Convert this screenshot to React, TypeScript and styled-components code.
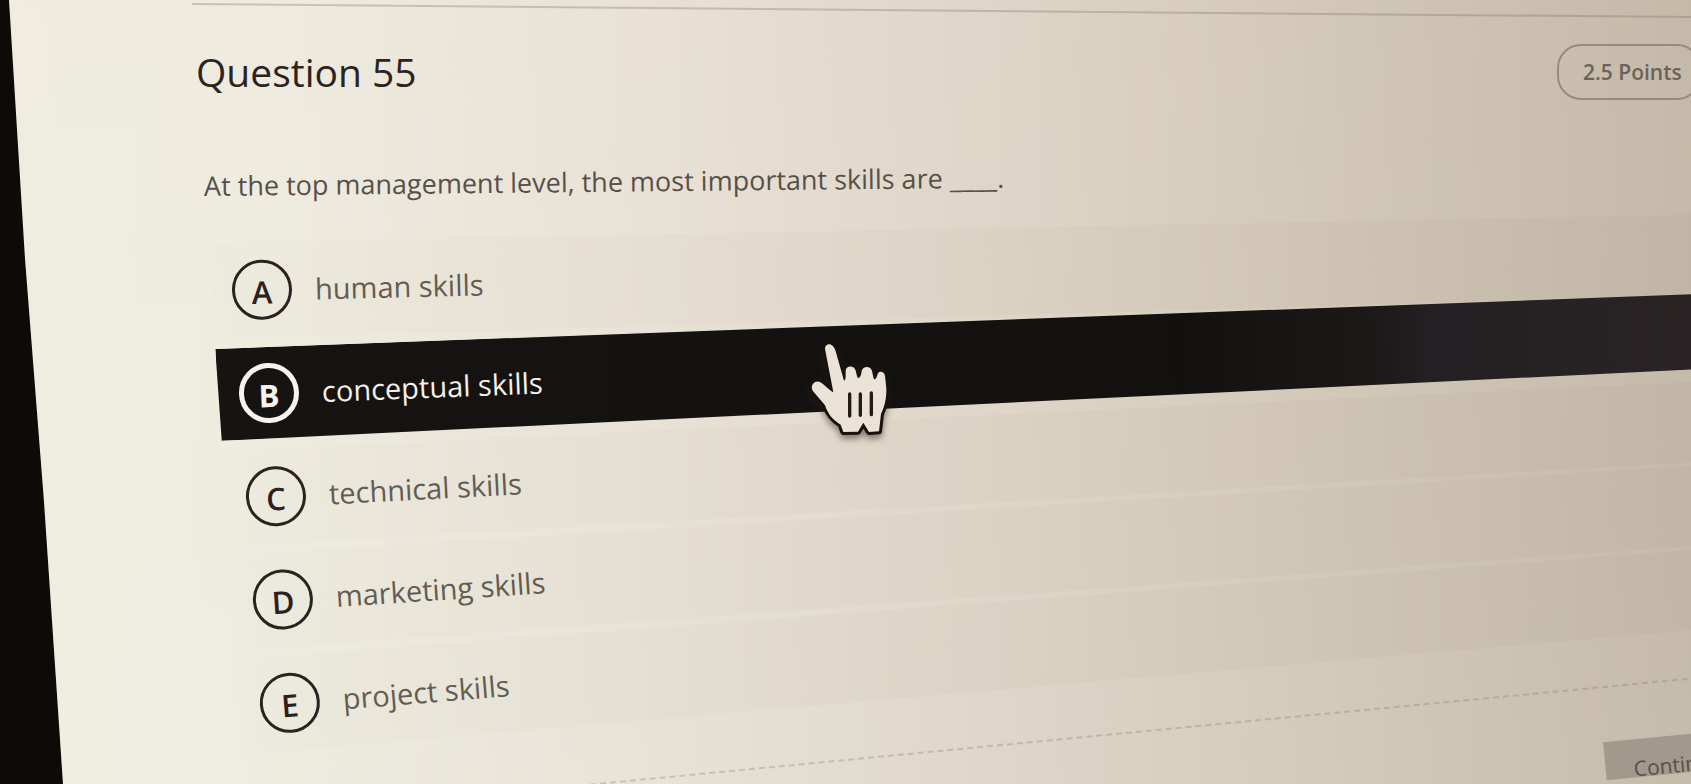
import React, { useState } from "react";
import styled, { createGlobalStyle } from "styled-components";

const GlobalStyle = createGlobalStyle`
  * { box-sizing: border-box; }
  body {
    margin: 0;
    background: #0d0b08;
    font-family: "Open Sans", "Noto Sans", sans-serif;
  }
`;

const Screen = styled.main`
  position: relative;
  height: 100vh;
  overflow: hidden;
  padding: 3px 0 0 192px;
  display: flex;
  flex-direction: column;
  background:
    linear-gradient(180deg, rgba(228, 196, 178, 0.08), rgba(232, 228, 214, 0.12)),
    linear-gradient(93deg, #f0f0e3 0%, #efeee2 16%, #e9e3d8 38%, #ded6c9 58%, #d0c7b7 78%, #c1b6a6 100%);
  clip-path: polygon(9px 0, 100% 0, 100% 100%, 63px 100%, 44px 64%, 25px 33%);
`;

const TopRule = styled.hr`
  width: 100%;
  flex: none;
  margin: 0;
  border: 0;
  border-top: 2px solid rgba(120, 108, 96, 0.32);
  transform: rotate(0.5deg);
  transform-origin: left;
`;

const Header = styled.header`
  display: flex;
  justify-content: space-between;
  align-items: center;
  margin-top: 39px;
  padding-left: 4px;
`;

const Title = styled.h1`
  margin: 0;
  font-size: 39px;
  line-height: 56px;
  font-weight: 400;
  color: #2c2322;
`;

const Points = styled.span`
  width: 144px;
  height: 56px;
  margin-right: -10px;
  padding-left: 24px;
  border: 2px solid #968b7e;
  border-radius: 24px;
  font-size: 21px;
  line-height: 52px;
  font-weight: 600;
  color: #6b635a;
`;

const Prompt = styled.p`
  margin: 66px 0 37px 12px;
  font-size: 27px;
  line-height: 40px;
  color: #57504a;
  white-space: nowrap;
  transform: rotate(-0.6deg);
  transform-origin: left;
`;

const Options = styled.div`
  display: flex;
  flex-direction: column;
  gap: 8px;
  margin-left: 18px;
`;

const Option = styled.label<{ $tilt: number; $step: number; $selected: boolean }>`
  display: flex;
  align-items: center;
  gap: 23px;
  height: 96px;
  margin-left: ${(p) => p.$step * 7}px;
  margin-right: -20px;
  padding-left: 22px;
  font-size: 29px;
  line-height: 40px;
  cursor: pointer;
  font-weight: ${(p) => (p.$selected ? 500 : 400)};
  color: ${(p) => (p.$selected ? "#f6f0e8" : "#635c54")};
  background: ${(p) =>
    p.$selected
      ? "linear-gradient(90deg, #161412 0%, #13110f 65%, #1c1817 77%, #231f22 81%, #2a2425 100%)"
      : "linear-gradient(90deg, rgba(130, 112, 84, 0.01), rgba(130, 112, 84, 0.03) 30%, rgba(130, 112, 84, 0.06))"};
  transform: rotate(${(p) => p.$tilt}deg);
  transform-origin: left;
  clip-path: ${(p) =>
    p.$selected ? "polygon(0 2px, 100% 4px, 100% 79px, 3px 94px)" : "polygon(0 0, 100% 8px, 100% 88px, 3px 100%)"};
`;

const Bubble = styled.span`
  display: grid;
  place-items: center;
`;

const Radio = styled.input`
  grid-area: 1 / 1;
  appearance: none;
  width: 60px;
  height: 60px;
  margin: 0;
  border: 3px solid #2b2120;
  border-radius: 50%;
  cursor: pointer;

  &:checked {
    border: 5px solid #f8f3ee;
  }
`;

const Letter = styled.span<{ $selected: boolean }>`
  grid-area: 1 / 1;
  padding-top: 4px;
  font-size: 31px;
  line-height: 40px;
  font-weight: ${(p) => (p.$selected ? 700 : 600)};
  color: ${(p) => (p.$selected ? "#f8f3ee" : "#2b2120")};
`;

const Footer = styled.footer`
  display: flex;
  justify-content: flex-end;
  margin: 0 -60px 0 -12px;
  padding-top: 54px;
  border-top: 2px dashed rgba(120, 110, 96, 0.28);
  transform: rotate(-5.5deg);
  transform-origin: 45% 0;
`;

const Continue = styled.button`
  display: flex;
  width: 150px;
  height: 38px;
  padding: 14px 0 0 28px;
  overflow: hidden;
  border: 0;
  background: #a2988b;
  color: #57504a;
  font: 500 21px/30px "Open Sans", "Noto Sans", sans-serif;
`;

const Pointer = styled.svg`
  position: absolute;
  left: 780px;
  top: 320px;
  width: 140px;
  height: 140px;
  pointer-events: none;
  filter: drop-shadow(0 4px 3px rgba(40, 30, 20, 0.5));
`;

const handOutline =
  "M136 92C132 78 142 70 153 74C160 77 164 84 167 94L192 182C198 180 197 168 197 152C199 134 224 136 227 152L232 172C237 178 243 170 245 153C249 136 273 138 276 153L281 176C286 182 290 172 294 160C300 152 313 155 315 168L319 205C320 240 312 262 303 282L297 334L267 336L250 308L234 335L190 336L182 314C158 300 144 282 135 256L98 212C91 198 100 183 117 185C128 188 142 206 160 217Z";

const choices = [
  { letter: "A", text: "human skills", tilt: -1.4 },
  { letter: "B", text: "conceptual skills", tilt: -2.2 },
  { letter: "C", text: "technical skills", tilt: -3 },
  { letter: "D", text: "marketing skills", tilt: -3.8 },
  { letter: "E", text: "project skills", tilt: -4.6 },
];

export default function App() {
  const [answer, setAnswer] = useState("B");
  return (
    <>
      <GlobalStyle />
      <Screen>
        <TopRule />
        <Header>
          <Title>Question 55</Title>
          <Points>2.5 Points</Points>
        </Header>
        <Prompt id="prompt">At the top management level, the most important skills are ____.</Prompt>
        <Options role="radiogroup" aria-labelledby="prompt">
          {choices.map((c, i) => (
            <Option key={c.letter} $tilt={c.tilt} $step={i} $selected={answer === c.letter}>
              <Bubble>
                <Radio
                  type="radio"
                  name="answer"
                  value={c.letter}
                  checked={answer === c.letter}
                  onChange={() => setAnswer(c.letter)}
                />
                <Letter $selected={answer === c.letter}>{c.letter}</Letter>
              </Bubble>
              {c.text}
            </Option>
          ))}
        </Options>
        <Footer>
          <Continue type="button">Continue</Continue>
        </Footer>
        <Pointer viewBox="0 0 420 420" aria-hidden="true">
          <path d={handOutline} fill="none" stroke="#17110f" strokeWidth="18" strokeLinejoin="round" />
          <path d={handOutline} fill="#ebe3d8" />
          <path d="M209 222V288M241 222V286M274 219V284" stroke="#231b18" strokeWidth="10" strokeLinecap="round" />
        </Pointer>
      </Screen>
    </>
  );
}
